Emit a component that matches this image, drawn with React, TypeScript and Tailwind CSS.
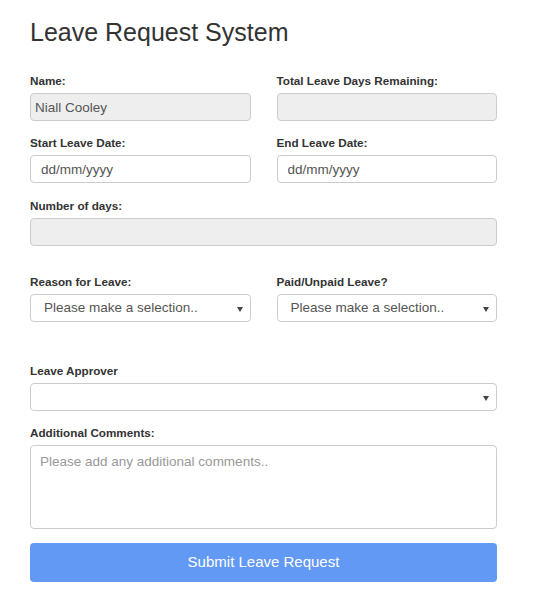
import React from 'react'

const labelCls = "block h-[17px] leading-[17px] mb-[4px] text-[11.7px] font-bold text-[#333]"
const inputCls = "block w-full h-[28px] rounded-[4px] border border-[#cccccc] text-[13.5px] text-[#555] outline-none"

function Caret() {
  return (
    <svg width="6" height="5" viewBox="0 0 6 5" className="absolute right-[7px] top-[12px]">
      <path d="M0 0 L6 0 L3 5 Z" fill="#444" />
    </svg>
  )
}

function Select({ text }: { text?: string }) {
  return (
    <div className="relative h-[28px] rounded-[4px] border border-[#cccccc] bg-white">
      {text && <span className="block pl-[13px] leading-[26px] text-[13.5px] text-[#555]">{text}</span>}
      <Caret />
    </div>
  )
}

export default function App() {
  return (
    <div className="min-h-[612px] bg-white font-['Liberation_Sans',Arial,sans-serif]">
      <div className="w-[467px] ml-[30px] pt-[17px]">
        <h1 className="text-[25px] leading-[30px] font-normal text-[#333]">Leave Request System</h1>

        <div className="grid grid-cols-2 gap-x-[26px] mt-[25px]">
          <div>
            <label className={labelCls}>Name:</label>
            <input className={inputCls + " bg-[#eeeeee] pl-[4px]"} disabled value="Niall Cooley" readOnly />
          </div>
          <div>
            <label className={labelCls}>Total Leave Days Remaining:</label>
            <input className={inputCls + " bg-[#eeeeee]"} disabled />
          </div>
        </div>

        <div className="grid grid-cols-2 gap-x-[26px] mt-[13px]">
          <div>
            <label className={labelCls}>Start Leave Date:</label>
            <input className={inputCls + " bg-white pl-[10px]"} value="dd/mm/yyyy" readOnly />
          </div>
          <div>
            <label className={labelCls}>End Leave Date:</label>
            <input className={inputCls + " bg-white pl-[10px]"} value="dd/mm/yyyy" readOnly />
          </div>
        </div>

        <div className="mt-[14px]">
          <label className={labelCls}>Number of days:</label>
          <input className={inputCls + " bg-[#eeeeee]"} disabled />
        </div>

        <div className="grid grid-cols-2 gap-x-[26px] mt-[27px]">
          <div>
            <label className={labelCls}>Reason for Leave:</label>
            <Select text="Please make a selection.." />
          </div>
          <div>
            <label className={labelCls}>Paid/Unpaid Leave?</label>
            <Select text="Please make a selection.." />
          </div>
        </div>

        <div className="mt-[40px]">
          <label className={labelCls}>Leave Approver</label>
          <Select />
        </div>

        <div className="mt-[13px]">
          <label className={labelCls}>Additional Comments:</label>
          <textarea
            className="block w-full h-[84px] resize-none rounded-[4px] border border-[#cccccc] bg-white px-[9px] py-[6px] text-[13.5px] text-[#555] placeholder:text-[#999] outline-none"
            placeholder="Please add any additional comments.."
          />
        </div>

        <button className="mt-[14px] w-full h-[39px] rounded-[4px] bg-[#6199f4] text-white text-[15px]">
          Submit Leave Request
        </button>
      </div>
    </div>
  )
}
